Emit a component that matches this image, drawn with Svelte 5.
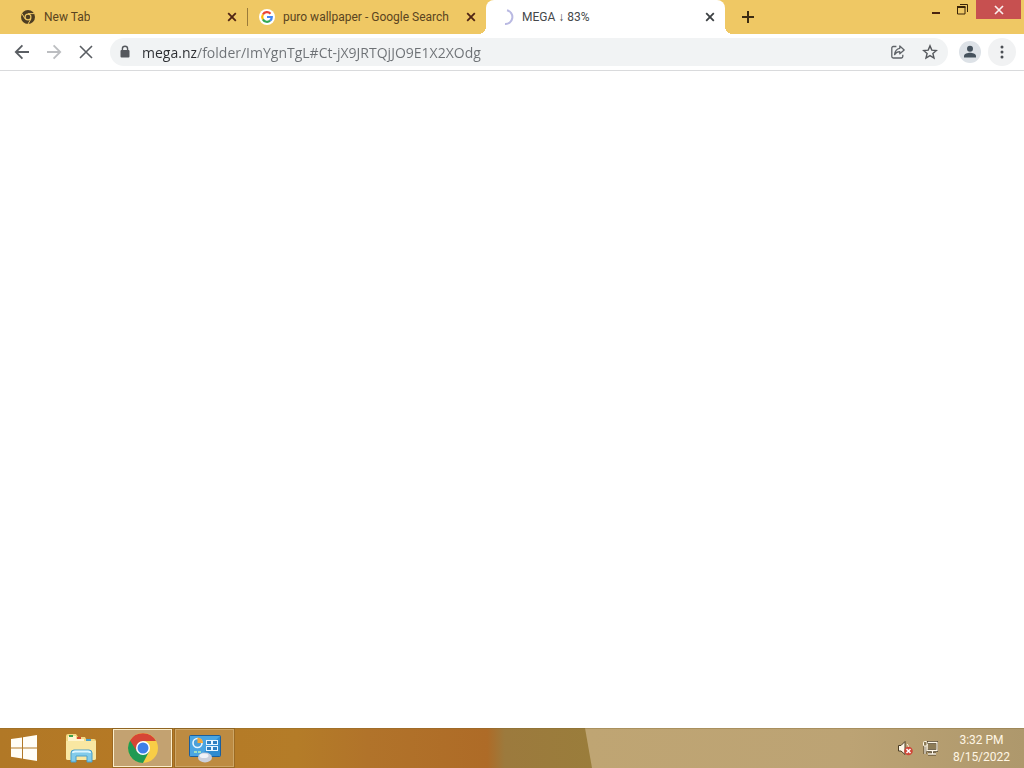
<script>
    let tabs = [
        { id: 1, title: "New Tab", icon: "chrome" },
        { id: 2, title: "puro wallpaper - Google Search", icon: "google" },
        { id: 3, title: "MEGA ↓ 83%", icon: "spinner" }
    ];
    let active = 3;
    let url = "mega.nz/folder/ImYgnTgL#Ct-jX9JRTQjJO9E1X2XOdg";

    function closeTab(id) {
        tabs = tabs.filter((t) => t.id !== id);
        if (active === id && tabs.length) active = tabs[tabs.length - 1].id;
    }

    function newTab() {
        const id = Date.now();
        tabs = [...tabs, { id, title: "New Tab", icon: "chrome" }];
        active = id;
    }
</script>

<div class="screen">
    <header class="strip">
        <div class="tabs">
            {#each tabs as tab, i (tab.id)}
                <div class="tab" class:active={tab.id === active} class:divided={tab.id !== active && tabs[i + 1] && tabs[i + 1].id !== active}>
                    <button class="tab-title" on:click={() => (active = tab.id)}>
                        {#if tab.icon === "chrome"}
                            <svg width="16" height="16" viewBox="0 0 16 16">
                                <circle cx="8" cy="8" r="7" fill="#4d3d22" />
                                <path d="M8 4.6h6.2M5 9.8L2 4.6M11 9.8L8 15" stroke="#efc864" stroke-width="1" />
                                <circle cx="8" cy="8" r="3.5" fill="#efc864" />
                                <circle cx="8" cy="8" r="2.3" fill="#4d3d22" />
                            </svg>
                        {:else if tab.icon === "google"}
                            <svg width="16" height="16" viewBox="0 0 16 16">
                                <circle cx="8" cy="8" r="8" fill="#fff" />
                                <g fill="none" stroke-width="2.2">
                                    <path d="M3.9 5.5A4.8 4.8 0 0 1 11.5 4.7" stroke="#ea4335" />
                                    <path d="M3.9 10.4A4.8 4.8 0 0 1 3.9 5.5" stroke="#fbbc05" />
                                    <path d="M11.1 11.7A4.8 4.8 0 0 1 3.9 10.4" stroke="#34a853" />
                                    <path d="M8 8h4.8A4.8 4.8 0 0 1 11.1 11.7" stroke="#4285f4" />
                                </g>
                            </svg>
                        {:else}
                            <svg width="16" height="16" viewBox="0 0 16 16">
                                <path d="M9 1.2A7 7 0 0 1 7 15" fill="none" stroke="#b9b9e2" stroke-width="2" />
                            </svg>
                        {/if}
                        <span>{tab.title}</span>
                    </button>
                    <button class="tab-close" aria-label="Close tab" on:click={() => closeTab(tab.id)}>
                        <svg width="10" height="10" viewBox="0 0 10 10">
                            <path d="M1.2 1.2l7.6 7.6M8.8 1.2L1.2 8.8" stroke="currentColor" stroke-width="1.8" />
                        </svg>
                    </button>
                </div>
            {/each}
            <button class="new-tab" aria-label="New tab" on:click={newTab}>
                <svg width="12" height="12" viewBox="0 0 12 12">
                    <path d="M6 0v12M0 6h12" stroke="#3c2c12" stroke-width="2" />
                </svg>
            </button>
        </div>
        <div class="window-controls">
            <button aria-label="Minimize">
                <svg width="12" height="12" viewBox="0 0 12 12"><path d="M2 9h8" stroke="#4a2410" stroke-width="2" /></svg>
            </button>
            <button aria-label="Restore">
                <svg width="12" height="12" viewBox="0 0 12 12" fill="none" stroke="#3a2408">
                    <path d="M3 0.5h7.5V8" />
                    <path d="M0.5 3h7.5v7h-7.5z" />
                    <path d="M0 3h8.5" stroke-width="2" />
                </svg>
            </button>
            <button class="close" aria-label="Close">
                <svg width="10" height="10" viewBox="0 0 10 10"><path d="M1 1l8 8M9 1L1 9" stroke="#fbeeee" stroke-width="1.7" /></svg>
            </button>
        </div>
    </header>

    <nav class="toolbar">
        <button aria-label="Back">
            <svg width="16" height="16" viewBox="0 0 16 16" fill="none" stroke="#5a5e63" stroke-width="1.8">
                <path d="M15 8H2M8.4 1.4L1.8 8l6.6 6.6" />
            </svg>
        </button>
        <button aria-label="Forward" disabled>
            <svg width="16" height="16" viewBox="0 0 16 16" fill="none" stroke="#bcbec1" stroke-width="1.8">
                <path d="M1 8h13M7.6 1.4L14.2 8l-6.6 6.6" />
            </svg>
        </button>
        <button aria-label="Stop loading">
            <svg width="14" height="14" viewBox="0 0 14 14" stroke="#5a5e63" stroke-width="1.6">
                <path d="M1 1l12 12M13 1L1 13" />
            </svg>
        </button>
        <div class="omnibox">
            <button aria-label="View site information">
                <svg width="10" height="14" viewBox="0 0 10 14">
                    <path d="M2.4 6V3.8a2.6 2.6 0 0 1 5.2 0V6" fill="none" stroke="#55585d" stroke-width="1.4" />
                    <rect x="0.5" y="5" width="9" height="7.6" rx="1" fill="#55585d" />
                </svg>
            </button>
            <input type="text" aria-label="Address and search bar" spellcheck="false" bind:value={url} />
            <button aria-label="Share this page">
                <svg width="16" height="16" viewBox="0 0 16 16" fill="none" stroke="#5f6368" stroke-width="1.3" stroke-linejoin="round">
                    <path d="M6.4 2.5H3.2A1.4 1.4 0 0 0 1.8 3.9v8.7A1.4 1.4 0 0 0 3.2 14h8.2a1.4 1.4 0 0 0 1.4-1.4v-1.8" />
                    <path d="M9.8 2l4.4 3.9-4.4 3.9V7.6C7.4 7.6 5.8 8.5 4.6 10.6 4.9 7 6.6 4.8 9.8 4.3z" />
                </svg>
            </button>
            <button aria-label="Bookmark this tab">
                <svg width="16" height="16" viewBox="0 0 16 16" fill="none" stroke="#55585d" stroke-width="1.4">
                    <path d="M8 1.9l1.8 4.2 4.6.4-3.5 3 1.1 4.5L8 11.6 4 14l1.1-4.5-3.5-3 4.6-.4z" />
                </svg>
            </button>
        </div>
        <button class="avatar" aria-label="Profile">
            <svg width="22" height="22" viewBox="0 0 22 22">
                <circle cx="11" cy="11" r="11" fill="#dde2e7" />
                <circle cx="11" cy="7.7" r="3" fill="#45525d" />
                <path d="M5 16.5v-1.6c0-2 3.6-3.1 6-3.1s6 1.1 6 3.1v1.6z" fill="#45525d" />
            </svg>
        </button>
        <button class="menu" aria-label="Chrome menu">
            <svg width="4" height="14" viewBox="0 0 4 14" fill="#4b4f54">
                <circle cx="2" cy="2" r="1.5" />
                <circle cx="2" cy="7" r="1.5" />
                <circle cx="2" cy="12" r="1.5" />
            </svg>
        </button>
    </nav>

    <main></main>

    <footer class="taskbar">
        <svg class="wallpaper" viewBox="0 0 1024 40" preserveAspectRatio="none" aria-hidden="true">
            <defs>
                <linearGradient id="wood">
                    <stop offset="0" stop-color="#b17826" />
                    <stop offset="0.2" stop-color="#b57925" />
                    <stop offset="0.5" stop-color="#b47c28" />
                    <stop offset="0.62" stop-color="#b1732a" />
                    <stop offset="0.82" stop-color="#ae6b27" />
                    <stop offset="0.85" stop-color="#9c7a3d" />
                    <stop offset="1" stop-color="#9a7d3b" />
                </linearGradient>
                <linearGradient id="sand">
                    <stop offset="0" stop-color="#bfa573" />
                    <stop offset="0.6" stop-color="#bca374" />
                    <stop offset="1" stop-color="#ae986c" />
                </linearGradient>
            </defs>
            <rect width="594" height="40" fill="url(#wood)" />
            <path d="M585 0h439v40H592z" fill="url(#sand)" />
            <path d="M0 0.5h1024" stroke="#7c622f" stroke-opacity="0.3" />
        </svg>
        <button class="start" aria-label="Start">
            <svg width="28" height="28" viewBox="0 0 28 28" fill="#fffdf6">
                <path d="M1 5l11-1.6v10H1zM13 3.2L27 1v12.4H13zM1 14.4h11v10L1 22.8zM13 14.4h14V27l-14-2.3z" />
            </svg>
        </button>
        <button class="task" aria-label="File Explorer">
            <svg width="34" height="30" viewBox="0 0 34 30">
                <path d="M2 3q0-2 2-2h8l2 3h7l1 2h8q2 0 2 2v17q0 2-2 2H4q-2 0-2-2z" fill="#f3d984" />
                <path d="M4 3h8v3h8v2h9v4H4z" fill="#fff5cd" />
                <path d="M5 2h4v2H5z" fill="#3ca14b" />
                <path d="M13 4h4v2h-4z" fill="#d44c2f" />
                <path d="M22 6h5v2h-5z" fill="#4a9fc9" />
                <path d="M2 8h30v17q0 2-2 2H4q-2 0-2-2z" fill="#f9e7a2" />
                <path d="M7 29v-9q0-3 3-3h15q3 0 3 3v9h-5v-6H12v6z" fill="#82cbea" stroke="#4a9fca" />
                <path d="M9 20q0-1.5 2-1.5h13q2 0 2 1.5" fill="none" stroke="#dcf6ff" stroke-width="2" />
            </svg>
        </button>
        <button class="task running current" aria-label="Google Chrome">
            <svg width="32" height="32" viewBox="0 0 32 32">
                <circle cx="16" cy="16" r="15" fill="#f8cd46" />
                <path d="M3.01 8.5A15 15 0 0 0 16 31L22.06 19.5 16 16z" fill="#1f9a54" />
                <path d="M3.01 8.5A15 15 0 0 1 28.99 9H16L9.94 19.5z" fill="#d64535" />
                <circle cx="16" cy="16" r="7" fill="#fff" />
                <circle cx="16" cy="16" r="5.5" fill="#3f7fe8" />
            </svg>
        </button>
        <button class="task running" aria-label="Control Panel">
            <svg width="34" height="30" viewBox="0 0 34 30">
                <rect x="1.5" y="2.5" width="31" height="21" rx="1" fill="#2f8bd0" stroke="#1b5f9e" />
                <path d="M2 3h30L12 23H2z" fill="#4aa5e2" />
                <circle cx="9.5" cy="10" r="4.5" fill="#4a9fd9" stroke="#e8f6ff" stroke-width="1.6" />
                <path d="M9.5 10V4.5a5.5 5.5 0 0 1 5.5 5.5z" fill="#f2a73b" />
                <g fill="#2f7fc0" stroke="#e8f6ff">
                    <rect x="18.5" y="7.5" width="5" height="4" />
                    <rect x="24.5" y="7.5" width="5" height="4" />
                    <rect x="18.5" y="13.5" width="5" height="4" />
                    <rect x="24.5" y="13.5" width="5" height="4" />
                </g>
                <path d="M6 18h3v2H6zM10 18h3v2h-3z" fill="#9fe0c0" />
                <ellipse cx="17" cy="24.5" rx="7" ry="5" fill="#cbd0dc" />
                <ellipse cx="16" cy="22.8" rx="4.5" ry="2.3" fill="#f0f2f8" />
            </svg>
        </button>
        <div class="tray">
            <button aria-label="Speakers: muted">
                <svg width="16" height="16" viewBox="0 0 16 16">
                    <path d="M1.5 5.5H4L8 1.5v13L4 11H1.5z" fill="#fff8e8" stroke="#4a3c24" />
                    <path d="M10 4q1.5 1.5 1.5 3" fill="none" stroke="#fff8e8" />
                    <circle cx="11.5" cy="11" r="4.3" fill="#cf4637" />
                    <path d="M9.5 9l4 4M13.5 9l-4 4" stroke="#fff" stroke-width="1.5" />
                </svg>
            </button>
            <button aria-label="Network">
                <svg width="16" height="16" viewBox="0 0 16 16" fill="none">
                    <path d="M5 2.5h10v8H5M10.5 11v3M6 14h8M3 6v8" stroke="#4a3c24" stroke-width="3" />
                    <path d="M6 2.5h9v8H5V4M10.5 11v3M6 14h8M3 6v8" stroke="#fff8e8" stroke-width="1.3" />
                    <path d="M6 4h8v5H6z" fill="#8d7c58" />
                    <rect x="1.5" y="1.5" width="3.5" height="4.5" rx="1" fill="#8d7c58" stroke="#fff8e8" />
                </svg>
            </button>
            <button class="clock">
                <time datetime="15:32">3:32 PM</time>
                <time datetime="2022-08-15">8/15/2022</time>
            </button>
        </div>
    </footer>
</div>

<style>
    :global(body) {
        margin: 0;
        background: #fff;
    }

    .screen {
        display: flex;
        flex-direction: column;
        min-height: 100vh;
        font-family: Roboto, "Open Sans", sans-serif;
        font-size: 12px;
    }

    button {
        display: flex;
        align-items: center;
        justify-content: center;
        padding: 0;
        border: 0;
        background: none;
        font: inherit;
        color: inherit;
    }

    svg {
        flex: none;
        display: block;
    }

    /* Tab strip */
    .strip {
        display: flex;
        height: 34px;
        background: #efc864;
        color: #5a4420;
    }
    .tabs {
        display: flex;
        flex: 1;
        min-width: 0;
        padding-left: 8px;
    }
    .tab {
        position: relative;
        display: flex;
        align-items: center;
        flex: 0 1 239px;
        min-width: 0;
        box-sizing: border-box;
        padding: 0 8px 0 12px;
    }
    .tab.divided::after {
        content: "";
        position: absolute;
        right: -1px;
        top: 8px;
        width: 1px;
        height: 18px;
        background: #9a7b3a;
    }
    .tab-title {
        flex: 1;
        min-width: 0;
        height: 34px;
        gap: 8px;
        justify-content: flex-start;
    }
    .tab-title span {
        overflow: hidden;
        white-space: nowrap;
    }
    .tab-close {
        width: 14px;
        height: 16px;
        color: #4f2414;
    }
    .active {
        background: #fff;
        color: #45474a;
        border-radius: 8px 8px 0 0;
    }
    .active .tab-close {
        color: #3c4043;
    }
    .active::before,
    .active::after {
        content: "";
        position: absolute;
        bottom: 0;
        width: 8px;
        height: 8px;
    }
    .active::before {
        right: 100%;
        background: radial-gradient(circle at 0 0, transparent 8px, #fff 8px);
    }
    .active::after {
        left: 100%;
        background: radial-gradient(circle at 100% 0, transparent 8px, #fff 8px);
    }
    .new-tab {
        width: 28px;
        height: 34px;
        margin-left: 9px;
    }
    .window-controls {
        display: flex;
        align-items: flex-start;
        padding-right: 3px;
    }
    .window-controls button {
        width: 27px;
        height: 19px;
    }
    .window-controls .close {
        width: 45px;
        background: #c75050;
    }

    /* Toolbar */
    .toolbar {
        display: flex;
        align-items: center;
        gap: 4px;
        height: 36px;
        padding: 0 8px;
        border-bottom: 1px solid #d9dadc;
        background: #fff;
    }
    .toolbar button {
        flex: none;
        width: 28px;
        height: 28px;
    }
    .omnibox {
        display: flex;
        align-items: center;
        flex: 1;
        min-width: 0;
        gap: 2px;
        height: 28px;
        margin: 0 4px 0 6px;
        padding-right: 3px;
        border-radius: 14px;
        background: #f1f3f4;
    }
    .toolbar .omnibox button {
        width: 30px;
    }
    .omnibox input {
        flex: 1;
        min-width: 0;
        height: 28px;
        padding: 0;
        border: 0;
        outline: 0;
        font-family: "Open Sans", "Noto Sans", sans-serif;
        font-size: 14px;
        color: transparent;
        caret-color: #202124;
        /* host name dark, rest of the address grey */
        background: linear-gradient(90deg, #2b2d31 54px, #6d7175 54px);
        background-clip: text;
        -webkit-background-clip: text;
    }
    .toolbar .menu {
        border-radius: 50%;
        background: #f1f2f3;
    }

    main {
        flex: 1;
        background: #fff;
    }

    /* Taskbar */
    .taskbar {
        position: relative;
        display: flex;
        gap: 3px;
        height: 40px;
    }
    .wallpaper {
        position: absolute;
        inset: 0;
        width: 100%;
        height: 100%;
    }
    .taskbar button {
        position: relative;
    }
    .start {
        width: 48px;
    }
    .task {
        width: 59px;
        box-sizing: border-box;
    }
    .running {
        margin: 1px 0;
        border: 1px solid #cda666;
        background: rgba(200, 160, 100, 0.45);
        box-shadow: 0 0 0 1px rgba(110, 75, 25, 0.35);
    }
    .current {
        border-color: #fbeecb;
        background: #c3a271;
    }
    .tray {
        display: flex;
        align-items: center;
        gap: 9px;
        margin-left: auto;
        padding-right: 14px;
    }
    .clock {
        flex-direction: column;
        width: 57px;
        margin-left: 6px;
        padding-top: 2px;
        line-height: 17px;
        color: #fff6e4;
    }
</style>
